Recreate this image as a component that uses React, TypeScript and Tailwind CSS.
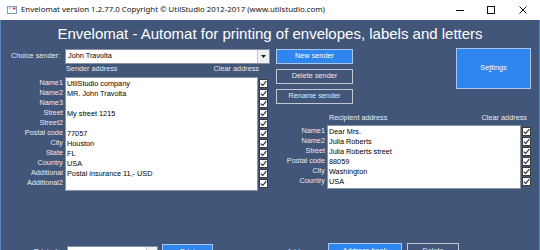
import React from 'react';

type Row = [string, string];

const senderRows: Row[] = [
  ['Name1', 'UtilStudio company'],
  ['Name2', 'MR. John Travolta'],
  ['Name3', ''],
  ['Street', 'My street 1215'],
  ['Street2', ''],
  ['Postal code', '77057'],
  ['City', 'Houston'],
  ['State', 'FL'],
  ['Country', 'USA'],
  ['Additional', 'Postal insurance 11,- USD'],
  ['Additional2', ''],
];

const recipientRows: Row[] = [
  ['Name1', 'Dear Mrs.'],
  ['Name2', 'Julia Roberts'],
  ['Street', 'Julia Roberts street'],
  ['Postal code', '88059'],
  ['City', 'Washington'],
  ['Country', 'USA'],
];

function Check() {
  return (
    <div className="h-[10px] flex items-center">
      <div className="w-[9px] h-[9px] bg-white border border-[#3a3a3a] flex items-center justify-center">
        <svg width="7" height="7" viewBox="0 0 7 7">
          <path d="M0.8 3.6 L2.7 5.5 L6.3 1.2" fill="none" stroke="#222" strokeWidth="1.1" />
        </svg>
      </div>
    </div>
  );
}

function AddressList({ rows, labelW, boxW }: { rows: Row[]; labelW: string; boxW: string }) {
  return (
    <div className="flex">
      {/* labels */}
      <div className={`${labelW} flex flex-col pt-[1px] text-right text-[#e6ebf3]`}>
        {rows.map(([label]) => (
          <div key={label} className="h-[10px] leading-[10px]">{label}</div>
        ))}
      </div>
      {/* text box */}
      <div className={`${boxW} ml-[2px] bg-white border border-[#8a93a3] py-[1px] text-black`}>
        {rows.map(([label, value]) => (
          <div key={label} className="h-[10px] leading-[10px] pl-[1px] whitespace-nowrap">{value}</div>
        ))}
      </div>
      {/* checkboxes */}
      <div className="flex flex-col pt-[1px] ml-[1px]">
        {rows.map(([label]) => (
          <Check key={label} />
        ))}
      </div>
    </div>
  );
}

function BlueButton({ children, className = '' }: { children: React.ReactNode; className?: string }) {
  return (
    <div className={`bg-[#2f86ee] border border-[#a8c6ee] text-white flex items-center justify-center ${className}`}>
      {children}
    </div>
  );
}

function DarkButton({ children, className = '' }: { children: React.ReactNode; className?: string }) {
  return (
    <div className={`border border-[#c3cad6] text-[#e6ebf3] flex items-center justify-center ${className}`}>
      {children}
    </div>
  );
}

export default function App() {
  return (
    <div className="w-[540px] h-[250px] overflow-hidden flex flex-col bg-[#42567a] text-[7.3px] font-['Liberation_Sans',Arial,sans-serif]">
      {/* window title bar */}
      <div className="h-[20px] shrink-0 bg-white flex items-center text-black">
        <svg className="ml-[7px]" width="10" height="8" viewBox="0 0 10 8">
          <rect x="0.5" y="0.5" width="9" height="7" fill="#fff" stroke="#7d9cc8" />
          <rect x="6" y="1.5" width="2.5" height="2" fill="#e2333a" />
          <line x1="1.5" y1="2" x2="4.5" y2="2" stroke="#7d9cc8" strokeWidth="0.8" />
        </svg>
        <span className="ml-[4px] text-[7.85px] font-['Noto_Sans',sans-serif] text-[#111]">
          Envelomat version 1.2.77.0 Copyright © UtilStudio 2012-2017 (www.utilstudio.com)
        </span>
        <div className="ml-auto flex items-center">
          <svg width="8" height="8" viewBox="0 0 8 8" className="mr-[23px]">
            <line x1="0" y1="4.5" x2="8" y2="4.5" stroke="#111" strokeWidth="1" />
          </svg>
          <svg width="8" height="8" viewBox="0 0 8 8" className="mr-[24px]">
            <rect x="0.5" y="0.5" width="7" height="7" fill="none" stroke="#111" strokeWidth="1" />
          </svg>
          <svg width="8" height="8" viewBox="0 0 8 8" className="mr-[13px]">
            <path d="M0.5 0.5 L7.5 7.5 M7.5 0.5 L0.5 7.5" stroke="#111" strokeWidth="1" />
          </svg>
        </div>
      </div>

      {/* window body */}
      <div className="flex-1 flex flex-col border-x border-[#5b82bf]">
        <div className="h-[28px] flex items-center justify-center text-white text-[15px] leading-[18px]">
          Envelomat - Automat for printing of envelopes, labels and letters
        </div>

        <div className="flex mt-[1px]">
          {/* sender side */}
          <div className="w-[269px] flex flex-col">
            <div className="flex h-[15px] items-center">
              <div className="w-[59px] text-right text-[#e6ebf3]">Choice sender:</div>
              <div className="ml-[5px] w-[205px] h-[15px] bg-white border border-[#8a93a3] flex items-center text-black">
                <span className="pl-[2px] flex-1">John Travolta</span>
                <div className="w-[12px] h-full bg-[#f0f0f0] border-l border-[#c8c8c8] flex items-center justify-center">
                  <svg width="5" height="3" viewBox="0 0 5 3">
                    <path d="M0 0 L5 0 L2.5 3 Z" fill="#111" />
                  </svg>
                </div>
              </div>
            </div>
            <div className="flex h-[13px] items-end pb-[2px] text-[#e6ebf3] whitespace-nowrap">
              <div className="ml-[65px]">Sender address</div>
              <div className="ml-auto mr-[11px]">Clear address</div>
            </div>
            <AddressList rows={senderRows} labelW="w-[62px]" boxW="w-[193px]" />
          </div>

          {/* right side */}
          <div className="flex-1 flex flex-col">
            <div className="flex">
              <div className="ml-[6px] w-[77px] flex flex-col gap-[5px]">
                <BlueButton className="h-[15px]">New sender</BlueButton>
                <DarkButton className="h-[15px]">Delete sender</DarkButton>
                <DarkButton className="h-[15px]">Rename sender</DarkButton>
              </div>
              <BlueButton className="ml-[103px] -mt-[1px] w-[75px] h-[41px]">
                <span>
                  Se<span className="underline">t</span>tings
                </span>
              </BlueButton>
            </div>
            <div className="flex h-[11px] mt-[10px] items-end pb-[1px] text-[#e6ebf3] whitespace-nowrap">
              <div className="ml-[59px]">Recipient address</div>
              <div className="ml-auto mr-[12px]">Clear address</div>
            </div>
            <AddressList rows={recipientRows} labelW="w-[55px]" boxW="w-[194px]" />
          </div>
        </div>

        {/* bottom controls, cut off by the window */}
        <div className="flex items-start mt-[52px]">
          <div className="w-[58px] mt-[4px] text-right text-[#e6ebf3]">Print of:</div>
          <div className="ml-[8px] mt-[3px] w-[91px] h-[15px] bg-white border border-[#8a93a3] flex text-black">
            <span className="pl-[2px] flex-1 leading-[13px]">Letter</span>
            <div className="w-[11px] h-full bg-[#f0f0f0] border-l border-[#c8c8c8]" />
          </div>
          <BlueButton className="ml-[4px] mt-[1px] w-[51px] h-[16px]">Print</BlueButton>
          <div className="ml-[74px] mt-[4px] w-[36px] text-[#e6ebf3]">Address:</div>
          <BlueButton className="ml-[5px] w-[74px] h-[16px]">Address book</BlueButton>
          <DarkButton className="ml-[5px] w-[52px] h-[16px]">Delete</DarkButton>
        </div>
      </div>
    </div>
  );
}
